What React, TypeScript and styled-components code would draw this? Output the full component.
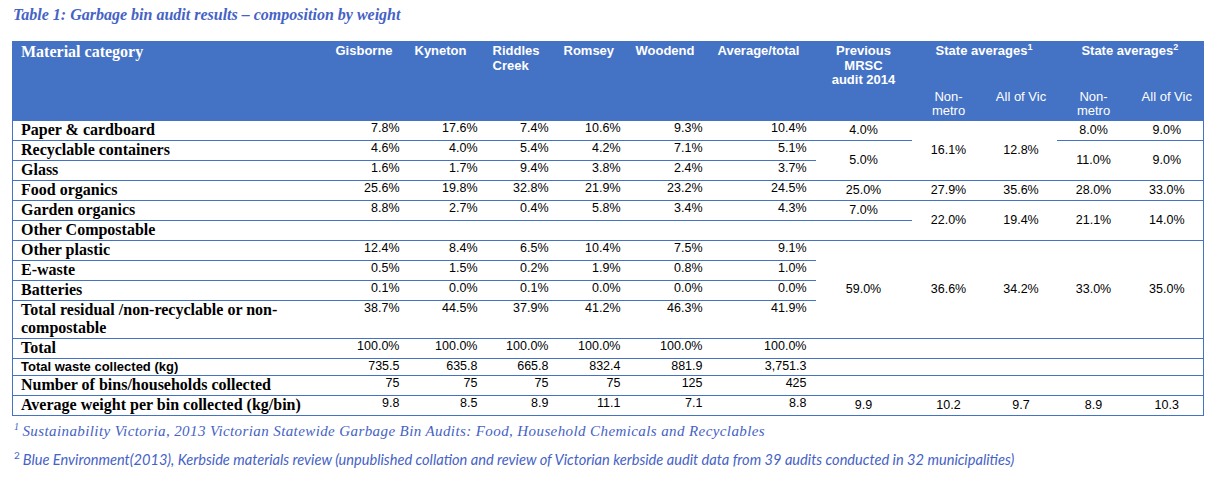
import React from 'react';
import styled, { createGlobalStyle } from 'styled-components';

const BLUE = '#4472C4';
const INK = '#4562C6';

const GlobalStyle = createGlobalStyle`
  html, body {
    margin: 0;
    padding: 0;
    background: #ffffff;
  }
  body {
    font-family: "Liberation Sans", Arial, sans-serif;
    color: #000;
  }
`;

const Page = styled.div`
  width: 1226px;
  height: 477px;
  box-sizing: border-box;
  padding: 6px 0 0 12px;
  overflow: hidden;
`;

const Caption = styled.div`
  font-family: "Liberation Serif", "Times New Roman", serif;
  font-weight: bold;
  font-style: italic;
  font-size: 16px;
  line-height: 18px;
  color: ${INK};
  padding-left: 1px;
  margin-bottom: 17px;
`;

const Table = styled.table`
  width: 1191px;
  table-layout: fixed;
  border-collapse: collapse;
  border: 1px solid ${BLUE};
`;

const HeadRow = styled.tr<{ $h: number }>`
  height: ${(p) => p.$h}px;
  background: ${BLUE};
`;

const HeadCell = styled.th<{ $align?: 'left' | 'center'; $light?: boolean }>`
  background: ${BLUE};
  color: #ffffff;
  font-family: "Liberation Sans", Arial, sans-serif;
  font-size: 13px;
  line-height: 14.5px;
  font-weight: ${(p) => (p.$light ? 'normal' : 'bold')};
  text-align: ${(p) => p.$align || 'left'};
  vertical-align: top;
  padding: 2px 6px 0;
  border: none;

  sup {
    font-size: 9px;
    line-height: 0;
    vertical-align: 5px;
  }
`;

const CategoryHead = styled(HeadCell)`
  font-family: "Liberation Serif", "Times New Roman", serif;
  font-size: 16px;
  line-height: 18px;
  padding: 1px 8px 0;
`;

const Row = styled.tr``;

const LabelCell = styled.td<{ $sans?: boolean }>`
  font-family: ${(p) =>
    p.$sans ? '"Liberation Sans", Arial, sans-serif' : '"Liberation Serif", "Times New Roman", serif'};
  font-weight: bold;
  font-size: ${(p) => (p.$sans ? '13px' : '16px')};
  line-height: ${(p) => (p.$sans ? '16px' : '18px')};
  padding: 0 8px ${(p) => (p.$sans ? '0' : '1px')};
  vertical-align: top;
  border-bottom: 1px solid ${BLUE};
`;

const NumCell = styled.td`
  font-size: 12.5px;
  line-height: 15px;
  text-align: right;
  vertical-align: top;
  padding: 0 9px 0 0;
  border-bottom: 1px solid ${BLUE};
`;

const SpanCell = styled.td`
  font-size: 12.5px;
  line-height: 15px;
  text-align: center;
  vertical-align: middle;
  padding: 0 4px;
  border-bottom: 1px solid ${BLUE};
`;

const Notes = styled.div`
  margin-top: 6px;
  display: flex;
  flex-direction: column;
  gap: 11px;
  color: ${INK};
`;

const NoteSerif = styled.div`
  font-family: "Liberation Serif", "Times New Roman", serif;
  font-style: italic;
  font-size: 15px;
  letter-spacing: 0.4px;
  line-height: 18px;
  padding-left: 2px;

  sup {
    font-size: 10px;
    line-height: 0;
    vertical-align: 6px;
    margin-right: 3px;
  }
`;

const NoteSans = styled.div`
  font-family: Lato, "Open Sans", sans-serif;
  font-style: italic;
  font-size: 14.6px;
  line-height: 18px;
  padding-left: 2px;

  sup {
    font-style: normal;
    font-size: 10px;
    line-height: 0;
    vertical-align: 6px;
    margin-right: 3px;
  }
`;

const widths = [317, 79, 78, 71, 72, 82, 104, 96, 74, 71, 74, 73];

type Extra = { text: string; span?: number };
type BodyRow = { label: React.ReactNode; sans?: boolean; values: string[]; extra: Extra[] };

const blank6 = ['', '', '', '', '', ''];
const empty5: Extra[] = [{ text: '' }, { text: '' }, { text: '' }, { text: '' }, { text: '' }];

const rows: BodyRow[] = [
  {
    label: 'Paper & cardboard',
    values: ['7.8%', '17.6%', '7.4%', '10.6%', '9.3%', '10.4%'],
    extra: [
      { text: '4.0%' },
      { text: '16.1%', span: 3 },
      { text: '12.8%', span: 3 },
      { text: '8.0%' },
      { text: '9.0%' },
    ],
  },
  {
    label: 'Recyclable containers',
    values: ['4.6%', '4.0%', '5.4%', '4.2%', '7.1%', '5.1%'],
    extra: [
      { text: '5.0%', span: 2 },
      { text: '11.0%', span: 2 },
      { text: '9.0%', span: 2 },
    ],
  },
  { label: 'Glass', values: ['1.6%', '1.7%', '9.4%', '3.8%', '2.4%', '3.7%'], extra: [] },
  {
    label: 'Food organics',
    values: ['25.6%', '19.8%', '32.8%', '21.9%', '23.2%', '24.5%'],
    extra: [{ text: '25.0%' }, { text: '27.9%' }, { text: '35.6%' }, { text: '28.0%' }, { text: '33.0%' }],
  },
  {
    label: 'Garden organics',
    values: ['8.8%', '2.7%', '0.4%', '5.8%', '3.4%', '4.3%'],
    extra: [
      { text: '7.0%' },
      { text: '22.0%', span: 2 },
      { text: '19.4%', span: 2 },
      { text: '21.1%', span: 2 },
      { text: '14.0%', span: 2 },
    ],
  },
  { label: 'Other Compostable', values: blank6, extra: [{ text: '' }] },
  {
    label: 'Other plastic',
    values: ['12.4%', '8.4%', '6.5%', '10.4%', '7.5%', '9.1%'],
    extra: [
      { text: '59.0%', span: 4 },
      { text: '36.6%', span: 4 },
      { text: '34.2%', span: 4 },
      { text: '33.0%', span: 4 },
      { text: '35.0%', span: 4 },
    ],
  },
  { label: 'E-waste', values: ['0.5%', '1.5%', '0.2%', '1.9%', '0.8%', '1.0%'], extra: [] },
  { label: 'Batteries', values: ['0.1%', '0.0%', '0.1%', '0.0%', '0.0%', '0.0%'], extra: [] },
  {
    label: (
      <>
        Total residual /non-recyclable or non-
        <br />
        compostable
      </>
    ),
    values: ['38.7%', '44.5%', '37.9%', '41.2%', '46.3%', '41.9%'],
    extra: [],
  },
  { label: 'Total', values: ['100.0%', '100.0%', '100.0%', '100.0%', '100.0%', '100.0%'], extra: empty5 },
  {
    label: 'Total waste collected (kg)',
    sans: true,
    values: ['735.5', '635.8', '665.8', '832.4', '881.9', '3,751.3'],
    extra: empty5,
  },
  {
    label: 'Number of bins/households collected',
    values: ['75', '75', '75', '75', '125', '425'],
    extra: empty5,
  },
  {
    label: 'Average weight per bin collected (kg/bin)',
    values: ['9.8', '8.5', '8.9', '11.1', '7.1', '8.8'],
    extra: [{ text: '9.9' }, { text: '10.2' }, { text: '9.7' }, { text: '8.9' }, { text: '10.3' }],
  },
];

const towns = ['Gisborne', 'Kyneton', 'Riddles Creek', 'Romsey', 'Woodend', 'Average/total'];

export default function App() {
  return (
    <Page>
      <GlobalStyle />
      <Caption>Table 1: Garbage bin audit results – composition by weight</Caption>
      <Table>
        <colgroup>
          {widths.map((w, i) => (
            <col key={i} style={{ width: w }} />
          ))}
        </colgroup>
        <thead>
          <HeadRow $h={46}>
            <CategoryHead rowSpan={2}>Material category</CategoryHead>
            {towns.map((t) => (
              <HeadCell key={t} rowSpan={2}>
                {t === 'Riddles Creek' ? (
                  <>
                    Riddles
                    <br />
                    Creek
                  </>
                ) : (
                  t
                )}
              </HeadCell>
            ))}
            <HeadCell rowSpan={2} $align="center">
              Previous
              <br />
              MRSC
              <br />
              audit 2014
            </HeadCell>
            <HeadCell colSpan={2} $align="center">
              State averages<sup>1</sup>
            </HeadCell>
            <HeadCell colSpan={2} $align="center">
              State averages<sup>2</sup>
            </HeadCell>
          </HeadRow>
          <HeadRow $h={33}>
            {[0, 1].map((k) => (
              <React.Fragment key={k}>
                <HeadCell $align="center" $light>
                  Non-
                  <br />
                  metro
                </HeadCell>
                <HeadCell $align="center" $light>
                  All of Vic
                </HeadCell>
              </React.Fragment>
            ))}
          </HeadRow>
        </thead>
        <tbody>
          {rows.map((r, i) => (
            <Row key={i}>
              <LabelCell $sans={r.sans}>{r.label}</LabelCell>
              {r.values.map((v, j) => (
                <NumCell key={j}>{v}</NumCell>
              ))}
              {r.extra.map((e, j) => (
                <SpanCell key={`e${j}`} rowSpan={e.span || 1}>
                  {e.text}
                </SpanCell>
              ))}
            </Row>
          ))}
        </tbody>
      </Table>
      <Notes>
        <NoteSerif>
          <sup>1</sup>Sustainability Victoria, 2013 Victorian Statewide Garbage Bin Audits: Food, Household Chemicals and
          Recyclables
        </NoteSerif>
        <NoteSans>
          <sup>2</sup>Blue Environment(2013), Kerbside materials review (unpublished collation and review of Victorian
          kerbside audit data from 39 audits conducted in 32 municipalities)
        </NoteSans>
      </Notes>
    </Page>
  );
}
